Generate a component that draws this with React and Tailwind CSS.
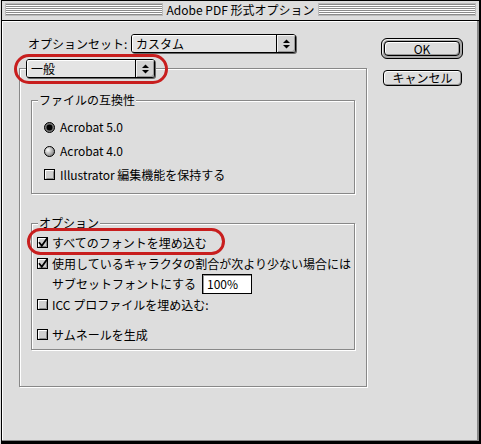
import React from "react";

function Arrows() {
  return (
    <svg width="7" height="10" viewBox="0 0 7 10">
      <polygon points="0,4 3.5,0.5 7,4" fill="#000" />
      <polygon points="0,6 3.5,9.5 7,6" fill="#000" />
    </svg>
  );
}

function Popup({ label, w }) {
  return (
    <div className={`flex h-[19px] ${w} shrink-0 rounded-[3px] border border-black bg-[#e4e4e4] shadow-[1px_1px_0_#666]`}>
      <div className="flex flex-1 items-center pl-[4px] text-[12px] leading-none rounded-l-[2px] shadow-[inset_1px_1px_0_#fff]">
        {label}
      </div>
      <div className="flex w-[19px] items-center justify-center border-l border-black bg-[#d2d2d2] rounded-r-[2px] shadow-[inset_1px_1px_0_#f4f4f4,inset_-1px_-1px_0_#999]">
        <Arrows />
      </div>
    </div>
  );
}

function Check({ on }) {
  return (
    <svg width="12" height="12" viewBox="0 0 12 12" className="shrink-0 overflow-visible">
      <rect x="0.5" y="0.5" width="10" height="10" fill="#cfcfcf" stroke="#000" />
      <path d="M1.5 9.5V1.5H9.5" stroke="#fff" fill="none" />
      <path d="M2.5 9.5H9.5V2.5" stroke="#8a8a8a" fill="none" />
      {on && <path d="M2 5.2 L4.8 8.8 L10.5 0.8" stroke="#000" strokeWidth="1.8" fill="none" />}
    </svg>
  );
}

function Radio({ on }) {
  return (
    <svg width="11" height="11" viewBox="0 0 11 11" className="shrink-0">
      <defs>
        <radialGradient id="rg" cx="35%" cy="35%" r="70%">
          <stop offset="0" stopColor="#ffffff" />
          <stop offset="1" stopColor="#7d7d7d" />
        </radialGradient>
      </defs>
      <circle cx="5.5" cy="5.5" r="5" fill={on ? "#777" : "url(#rg)"} stroke="#000" />
      {on && <circle cx="5.5" cy="5.5" r="3" fill="#000" />}
    </svg>
  );
}

function GroupLabel({ children }) {
  return (
    <div className="-mt-[8px] ml-[6px] self-start h-[14px] bg-[#dddddd] px-[1px] text-[12px] leading-[14px]">
      {children}
    </div>
  );
}

const etched = "border border-[#888888] shadow-[1px_1px_0_#ffffff,inset_1px_1px_0_#ffffff]";

export default function App() {
  return (
    <div className="relative h-[444px] w-[481px] overflow-hidden bg-[#dddddd] text-black font-['Noto_Sans_CJK_JP','Noto_Sans',sans-serif]">
      <div className="ml-[1px] flex h-[444px] w-[480px] flex-col border-t border-l border-r-2 border-b-[3px] border-black">
        {/* Title bar */}
        <div className="flex h-[20px] shrink-0 items-start border-b border-black px-[3px] pt-[2px]">
          <div className="h-[13px] flex-1 bg-[repeating-linear-gradient(to_bottom,#ffffff_0px,#ffffff_1px,#8a8a8a_1px,#8a8a8a_2px)] shadow-[inset_0_0_0_1px_#bbbbbb]" />
          <div className="px-[4px] text-[12px] leading-[13px] whitespace-nowrap">Adobe PDF 形式オプション</div>
          <div className="h-[13px] flex-1 bg-[repeating-linear-gradient(to_bottom,#ffffff_0px,#ffffff_1px,#8a8a8a_1px,#8a8a8a_2px)] shadow-[inset_0_0_0_1px_#bbbbbb]" />
        </div>

        {/* Body */}
        <div className="flex flex-1 border-r-2 border-b border-[#888888] shadow-[inset_1px_1px_0_#ffffff]">
          {/* Left column */}
          <div className="ml-[17px] flex w-[348px] flex-col pt-[13px]">
            <div className="flex h-[19px] items-center pl-[9px]">
              <span className="w-[103px] text-[12px] leading-none">オプションセット:</span>
              <Popup label="カスタム" w="w-[165px]" />
            </div>

            <div className={`mt-[15px] flex flex-col px-[11px] pb-[36px] ${etched}`}>
              <div className="-mt-[10px] -ml-[5px]">
                <Popup label="一般" w="w-[129px]" />
              </div>

              {/* File compatibility */}
              <div className={`mt-[22px] flex flex-col pb-[6px] ${etched}`}>
                <GroupLabel>ファイルの互換性</GroupLabel>
                <div className="mt-[8px] flex flex-col pl-[12px] text-[12px] leading-none">
                  <div className="flex h-[24px] items-center gap-[5px]">
                    <Radio on />
                    <span>Acrobat 5.0</span>
                  </div>
                  <div className="flex h-[24px] items-center gap-[5px]">
                    <Radio />
                    <span>Acrobat 4.0</span>
                  </div>
                  <div className="flex h-[24px] items-center gap-[4px]">
                    <Check />
                    <span>Illustrator 編集機能を保持する</span>
                  </div>
                </div>
              </div>

              {/* Options */}
              <div className={`mt-[29px] flex flex-col pb-[4px] ${etched}`}>
                <GroupLabel>オプション</GroupLabel>
                <div className="mt-[3px] flex flex-col pl-[5px] text-[12px] leading-none">
                  <div className="flex h-[20px] items-center gap-[3px]">
                    <Check on />
                    <span>すべてのフォントを埋め込む</span>
                  </div>
                  <div className="mt-[1px] flex h-[20px] items-center gap-[3px]">
                    <Check on />
                    <span className="whitespace-nowrap">使用しているキャラクタの割合が次より少ない場合には</span>
                  </div>
                  <div className="flex h-[20px] items-center pl-[15px]">
                    <span className="w-[150px]">サブセットフォントにする</span>
                    <div className="flex h-[20px] w-[50px] items-center border border-black bg-white pl-[4px] shadow-[inset_1px_1px_0_#999]">
                      100%
                    </div>
                  </div>
                  <div className="mt-[1px] flex h-[20px] items-center gap-[3px]">
                    <Check />
                    <span>ICC プロファイルを埋め込む:</span>
                  </div>
                  <div className="mt-[10px] flex h-[20px] items-center gap-[3px]">
                    <Check />
                    <span>サムネールを生成</span>
                  </div>
                </div>
              </div>
            </div>
          </div>

          {/* Right column: buttons */}
          <div className="ml-[14px] flex flex-col pt-[17px]">
            <div className="h-[21px] w-[82px] rounded-[6px] border border-black bg-[#a9a9a9] p-[2px] shadow-[inset_1px_1px_0_#eeeeee]">
              <div className="flex h-full items-center justify-center rounded-[4px] border border-black bg-[#dddddd] text-[12px] leading-none shadow-[inset_1px_1px_0_#ffffff,inset_-1px_-1px_0_#999999]">
                OK
              </div>
            </div>
            <div className="ml-[2px] mt-[11px] flex h-[16px] w-[79px] items-center justify-center rounded-[4px] border border-black bg-[#dddddd] text-[12px] leading-none shadow-[inset_1px_1px_0_#ffffff,inset_-1px_-1px_0_#999999]">
              キャンセル
            </div>
          </div>
        </div>
      </div>

      {/* Red annotation ellipses */}
      <div className="pointer-events-none absolute left-[14px] top-[54px] h-[30px] w-[154px] rounded-full border-[3px] border-[#c81e1e]" />
      <div className="pointer-events-none absolute left-[27px] top-[228px] h-[27px] w-[198px] rounded-full border-[3px] border-[#c81e1e]" />
    </div>
  );
}
